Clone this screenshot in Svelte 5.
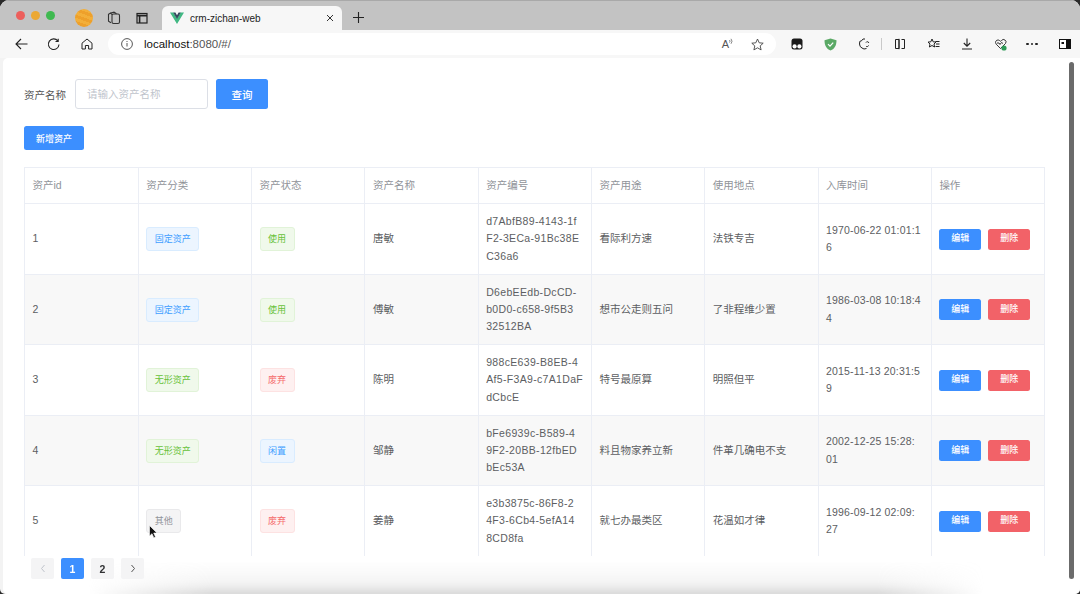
<script>
  const rows = [
    { id: '1', cat: ['固定资产', 'blue'], st: ['使用', 'green'], name: '唐敏', code: ['d7AbfB89-4143-1f', 'F2-3ECa-91Bc38E', 'C36a6'], use: '看际利方速', place: '法铁专吉', time: ['1970-06-22 01:01:1', '6'] },
    { id: '2', cat: ['固定资产', 'blue'], st: ['使用', 'green'], name: '傅敏', code: ['D6ebEEdb-DcCD-', 'b0D0-c658-9f5B3', '32512BA'], use: '想市公走则五问', place: '了非程维少置', time: ['1986-03-08 10:18:4', '4'] },
    { id: '3', cat: ['无形资产', 'green'], st: ['废弃', 'red'], name: '陈明', code: ['988cE639-B8EB-4', 'Af5-F3A9-c7A1DaF', 'dCbcE'], use: '特号最原算', place: '明照但平', time: ['2015-11-13 20:31:5', '9'] },
    { id: '4', cat: ['无形资产', 'green'], st: ['闲置', 'blue'], name: '邹静', code: ['bFe6939c-B589-4', '9F2-20BB-12fbED', 'bEc53A'], use: '料且物家养立新', place: '件革几确电不支', time: ['2002-12-25 15:28:', '01'] },
    { id: '5', cat: ['其他', 'gray'], st: ['废弃', 'red'], name: '姜静', code: ['e3b3875c-86F8-2', '4F3-6Cb4-5efA14', '8CD8fa'], use: '就七办最类区', place: '花温如才律', time: ['1996-09-12 02:09:', '27'] }
  ];
  const heads = ['资产id', '资产分类', '资产状态', '资产名称', '资产编号', '资产用途', '使用地点', '入库时间', '操作'];
</script>

<div class="window">
  <div class="tabbar">
    <div class="lights"><i class="l r"></i><i class="l y"></i><i class="l g"></i></div>
    <div class="avatar"></div>
    <svg class="ti" width="14" height="14" viewBox="0 0 14 14" fill="none" stroke="#333" stroke-width="1.1"><rect x="5" y="3" width="7.5" height="9.5" rx="1.5"/><path d="M5 3.5 3.6 2 1.5 3.2v7l2.5 1.6M3.6 2 7 1.2l2.5 1.6"/></svg>
    <svg class="ti2" width="12" height="12" viewBox="0 0 12 12" fill="none" stroke="#222" stroke-width="1.2"><rect x="1" y="1.5" width="10" height="9.5"/><path d="M1 3.6h10M3.6 3.6V11" stroke-width="1.6"/></svg>
    <div class="tab">
      <svg width="14" height="12" viewBox="0 0 14 12"><path d="M0 .5h3.4L7 6.6 10.600 .5H14L7 12z" fill="#41b883"/><path d="M3.200 .5h2.200L7 3.300 8.600 .5h2.200L7 7z" fill="#35495e"/></svg>
      <span class="tabtitle">crm-zichan-web</span>
      <svg class="close" width="8" height="8" viewBox="0 0 8 8" stroke="#333" stroke-width="1"><path d="M1 1l6 6M7 1 1 7"/></svg>
    </div>
    <svg class="plus" width="11" height="11" viewBox="0 0 11 11" stroke="#222" stroke-width="1.1"><path d="M5.500 0v11M0 5.500h11"/></svg>
  </div>

  <div class="toolbar">
    <svg class="nav" width="13" height="12" viewBox="0 0 13 12" fill="none" stroke="#222" stroke-width="1.1"><path d="M12.500 6H1M6 1 1 6l5 5"/></svg>
    <svg class="nav2" width="13" height="13" viewBox="0 0 13 13" fill="none" stroke="#222" stroke-width="1.1"><path d="M10.800 2.800A5.300 5.300 0 1 0 12 6.500M11.200 .8v2.700H8.500"/></svg>
    <svg class="nav3" width="12" height="12" viewBox="0 0 12 12" fill="none" stroke="#222" stroke-width="1"><path d="M1 5.200 6 1l5 4.200V11H7.600V7.500H4.400V11H1z"/></svg>
    <div class="address">
      <svg width="12" height="12" viewBox="0 0 12 12" fill="none" stroke="#444" stroke-width=".9"><circle cx="6" cy="6" r="5.400"/><path d="M6 5v3.500M6 3v1"/></svg>
      <span class="url"><b>localhost</b>:8080/#/</span>
      <span class="spacer"></span>
      <span class="read">A<svg width="5" height="7" viewBox="0 0 5 7" fill="none" stroke="#555" stroke-width=".7"><path d="M.5 2a2 2 0 0 1 0 2.500M2 .8a4 4 0 0 1 0 5"/></svg></span>
      <svg class="star" width="13" height="13" viewBox="0 0 13 13" fill="none" stroke="#444" stroke-width=".9"><path d="M6.500 1 8.200 4.800l4 .4-3 2.700.9 4-3.600-2.100-3.600 2.100.9-4-3-2.700 4-.4z"/></svg>
    </div>
    <div class="ext">
      <svg width="12" height="12" viewBox="0 0 12 12"><rect x=".5" y=".5" width="11" height="11" rx="2.500" fill="#1b1b1b"/><circle cx="3.600" cy="8.400" r="2.100" fill="#fff"/><circle cx="8.400" cy="8.400" r="2.100" fill="#fff"/></svg>
      <svg width="13" height="13" viewBox="0 0 13 13"><path d="M6.500 .5 12.500 2.200c0 5-1.700 8.500-6 10.300-4.300-1.800-6-5.300-6-10.300z" fill="#5aa965"/><path d="M4 6.200 6 8.200 9.200 4.600" fill="none" stroke="#fff" stroke-width="1.200"/></svg>
      <svg width="12" height="12" viewBox="0 0 12 12" fill="none" stroke="#222" stroke-width="1"><path d="M7 1H5L3.800 2.600 1.800 3.400 1.500 6l.7 2.500L4 10l2 1 2.500-.5M8 4.500a1.500 1.500 0 0 1 2.800 .5M10.500 7.500A1.500 1.500 0 0 1 8 8.200"/></svg>
      <i class="sep"></i>
      <svg width="12" height="12" viewBox="0 0 12 12" fill="none" stroke="#222" stroke-width="1"><path d="M5 1.500H1.500v9H5zM5 .8v10.400M7.500 1.500h3v9h-3"/></svg>
      <svg width="13" height="12" viewBox="0 0 13 12" fill="none" stroke="#222" stroke-width="1"><path d="M5 1 6.200 3.800l2.800.3L7 6l.6 3L5 7.500 2.400 9 3 6 1 4.100l2.800-.3zM8.500 3.500h4M9 6h3.500M8.500 8.500h4"/></svg>
      <svg width="12" height="12" viewBox="0 0 12 12" fill="none" stroke="#222" stroke-width="1.100"><path d="M6 .5V8M2.800 5 6 8.200 9.200 5M1 11h10"/></svg>
      <svg width="13" height="13" viewBox="0 0 13 13"><path d="M1.500 4.500a2.500 2.500 0 0 1 4-2l1 .8 1-.8a2.500 2.500 0 0 1 4 3L6.500 10.500 2.200 6.200zM3 5h2l1 1.500L7.500 4.500 9 5.500" fill="none" stroke="#222" stroke-width=".9"/><circle cx="10" cy="10" r="2.600" fill="#2f9b57"/></svg>
      <span class="dots"><i></i><i></i><i></i></span>
      <svg width="12" height="10" viewBox="0 0 12 10"><rect x=".5" y=".5" width="11" height="9" fill="#fff" stroke="#111"/><rect x="7" y=".5" width="4.500" height="9" fill="#111"/><rect x="2.500" y="3" width="2.500" height="2" fill="#111"/></svg>
    </div>
  </div>

  <main class="page">
    <form class="search">
      <span class="label">资产名称</span>
      <div class="input">请输入资产名称</div>
      <span class="btn primary large">查询</span>
    </form>
    <div class="add"><span class="btn primary medium">新增资产</span></div>

    <div class="tablewrap">
      <table>
        <thead>
          <tr>{#each heads as h}<th>{h}</th>{/each}</tr>
        </thead>
        <tbody>
          {#each rows as r, i}
            <tr class:striped={i % 2 === 1}>
              <td>{r.id}</td>
              <td><span class="tag {r.cat[1]}">{r.cat[0]}</span></td>
              <td><span class="tag {r.st[1]}">{r.st[0]}</span></td>
              <td>{r.name}</td>
              <td class="code">{#each r.code as c}<div>{c}</div>{/each}</td>
              <td>{r.use}</td>
              <td>{r.place}</td>
              <td class="time">{#each r.time as c}<div>{c}</div>{/each}</td>
              <td class="ops"><span class="btn primary small">编辑</span><span class="btn danger small">删除</span></td>
            </tr>
          {/each}
        </tbody>
      </table>
    </div>

    <div class="pager">
      <span class="pg dim"><svg width="6" height="9" viewBox="0 0 6 9" fill="none" stroke="#c0c4cc"><path d="M4.500 1 1.500 4.500l3 3.500"/></svg></span>
      <span class="pg active">1</span>
      <span class="pg">2</span>
      <span class="pg"><svg width="6" height="9" viewBox="0 0 6 9" fill="none" stroke="#555"><path d="M1.500 1l3 3.500L1.500 8"/></svg></span>
    </div>

    <div class="shade"></div>
    <div class="scrollbar"></div>
    <svg class="cursor" width="10" height="14" viewBox="0 0 10 14"><path d="M.5 .5v10.500l2.500-2.300 1.800 4 1.700-.8-1.800-3.900h3.300z" fill="#111" stroke="#fff" stroke-width=".6"/></svg>
  </main>
</div>

<style>
  :global(body) {
    margin: 0;
    background: #2a2a2a;
  }
  .window {
    width: 1080px;
    height: 594px;
    overflow: hidden;
    display: flex;
    flex-direction: column;
    font-family: "Liberation Sans", "Noto Sans CJK SC", sans-serif;
    color: #5f6266;
    background: #f3f3f3;
    border-radius: 9px 9px 5px 5px;
  }
  .tabbar {
    height: 30px;
    flex: none;
    background: #c3c3c3;
    border-top: 1px solid #a9a9a9;
    box-sizing: border-box;
    display: flex;
    align-items: center;
  }
  .lights {
    display: flex;
    gap: 6px;
    margin: 0 0 0 16px;
  }
  .l {
    width: 9px;
    height: 9px;
    border-radius: 50%;
  }
  .r { background: #ec5f5c; }
  .y { background: #eba834; }
  .g { background: #3fb950; }
  .avatar {
    width: 18px;
    height: 18px;
    border-radius: 50%;
    margin: 4px 0 0 20px;
    background:
      repeating-linear-gradient(20deg, rgba(255,215,110,.18) 0 3px, rgba(225,120,20,.12) 3px 6px),
      #f0a62e;
  }
  .ti { margin: 4px 0 0 14px; }
  .ti2 { margin: 4px 0 0 15px; }
  .tab {
    width: 180px;
    height: 24px;
    margin: 5px 0 0 14px;
    box-sizing: border-box;
    padding: 0 8px 0 8px;
    background: #f7f7f7;
    border-radius: 6px 6px 0 0;
    display: flex;
    align-items: center;
    color: #222;
  }
  .tabtitle {
    font-size: 10px;
    margin-left: 6px;
    flex: 1;
  }
  .plus { margin: 4px 0 0 11px; }
  .toolbar {
    height: 28px;
    flex: none;
    background: #f7f7f7;
    display: flex;
    align-items: center;
  }
  .nav { margin-left: 15px; }
  .nav2 { margin-left: 19px; }
  .nav3 { margin-left: 21px; }
  .address {
    width: 668px;
    height: 22px;
    margin-left: 15px;
    padding: 0 12px 0 13px;
    box-sizing: border-box;
    background: #fff;
    border-radius: 11px;
    display: flex;
    align-items: center;
    flex: none;
  }
  .url {
    margin-left: 11px;
    font-size: 11.500px;
    color: #555;
  }
  .url b {
    font-weight: 400;
    color: #111;
  }
  .spacer { flex: 1; }
  .read {
    font-size: 11px;
    color: #555;
    margin-right: 17px;
    display: flex;
    align-items: flex-start;
  }
  .ext {
    display: flex;
    align-items: center;
    margin-left: 15px;
    gap: 21px;
  }
  .sep {
    width: 1px;
    height: 12px;
    background: #c9c9c9;
    margin: 0 -9px 0 -10px;
  }
  .dots {
    display: flex;
    gap: 2px;
    margin-left: -2px;
  }
  .dots i {
    width: 2.500px;
    height: 2.500px;
    border-radius: 50%;
    background: #222;
  }
  .page {
    position: relative;
    flex: 1;
    min-height: 0;
    background: #fff;
    margin-left: 3px;
    border-radius: 5px 0 0 5px;
    padding: 21px 35px 0 21px;
    font-size: 10.500px;
    overflow: hidden;
    filter: blur(.4px);
  }
  .search {
    display: flex;
    align-items: center;
    height: 30px;
  }
  .label {
    width: 51px;
    color: #555;
  }
  .input {
    box-sizing: border-box;
    width: 133px;
    height: 30px;
    border: 1px solid #dcdfe6;
    border-radius: 3px;
    padding-left: 11px;
    line-height: 28px;
    color: #c0c4cc;
    margin-right: 8px;
  }
  .btn {
    display: inline-flex;
    align-items: center;
    justify-content: center;
    color: #fff;
    border-radius: 2.500px;
    box-sizing: border-box;
    font-weight: 500;
  }
  .primary { background: #3c8fff; }
  .danger { background: #f26268; }
  .large {
    width: 52px;
    height: 30px;
    font-size: 10.500px;
  }
  .medium {
    width: 60px;
    height: 24px;
    font-size: 9px;
  }
  .small {
    width: 42px;
    height: 21px;
    font-size: 9px;
  }
  .add {
    display: flex;
    margin: 17px 0 17px;
  }
  .tablewrap {
    height: 389px;
    overflow: hidden;
  }
  table {
    border-collapse: collapse;
    table-layout: fixed;
    width: 1021px;
  }
  th, td {
    border: 1px solid #ebeef5;
    padding: 8.750px 0 8.750px 7.500px;
    text-align: left;
    font-weight: 400;
    line-height: 17.250px;
    box-sizing: border-box;
    overflow: hidden;
    white-space: nowrap;
  }
  th {
    width: 113.300px;
    padding-top: 9px;
    padding-bottom: 9px;
    color: #909399;
  }
  th:first-child { width: 113.800px; }
  th:last-child { width: auto; }
  td { color: #5c5e62; }
  .code { letter-spacing: .33px; }
  .time { letter-spacing: .17px; }
  tbody tr { height: 70.500px; }
  .striped td { background: #f8f8f8; }
  .tag {
    display: inline-block;
    box-sizing: border-box;
    height: 24px;
    line-height: 22px;
    padding: 0 7.500px;
    border-radius: 3px;
    border: 1px solid;
    font-size: 9px;
    vertical-align: middle;
  }
  .blue { background: #ecf5ff; border-color: #d9ecff; color: #409eff; }
  .green { background: #f0f9eb; border-color: #e1f3d8; color: #67c23a; }
  .red { background: #fef0f0; border-color: #fde2e2; color: #f56c6c; }
  .gray { background: #f4f4f5; border-color: #e9e9eb; color: #909399; }
  .ops .btn + .btn { margin-left: 7px; }
  .pager {
    display: flex;
    gap: 7px;
    margin: 2px 0 0 7px;
    position: relative;
    z-index: 2;
  }
  .pg {
    width: 23px;
    height: 21px;
    background: #f4f4f5;
    border-radius: 2px;
    display: flex;
    align-items: center;
    justify-content: center;
    font-size: 10.500px;
    font-weight: 700;
    color: #303133;
  }
  .active {
    background: #3c8fff;
    color: #fff;
  }
  .shade {
    position: absolute;
    left: 85px;
    right: 95px;
    bottom: -6px;
    height: 38px;
    background: linear-gradient(to bottom, rgba(200,200,200,0), rgba(200,200,200,.2) 60%, rgba(190,190,190,.9));
    filter: blur(4px);
    mask-image: linear-gradient(to right, transparent, #000 14%, #000 88%, transparent);
  }
  .scrollbar {
    position: absolute;
    right: 6px;
    top: 4px;
    width: 5px;
    height: 517px;
    background: #6b6b6b;
    border-radius: 3px;
  }
  .cursor {
    position: absolute;
    left: 146px;
    top: 467px;
    z-index: 3;
  }
</style>
